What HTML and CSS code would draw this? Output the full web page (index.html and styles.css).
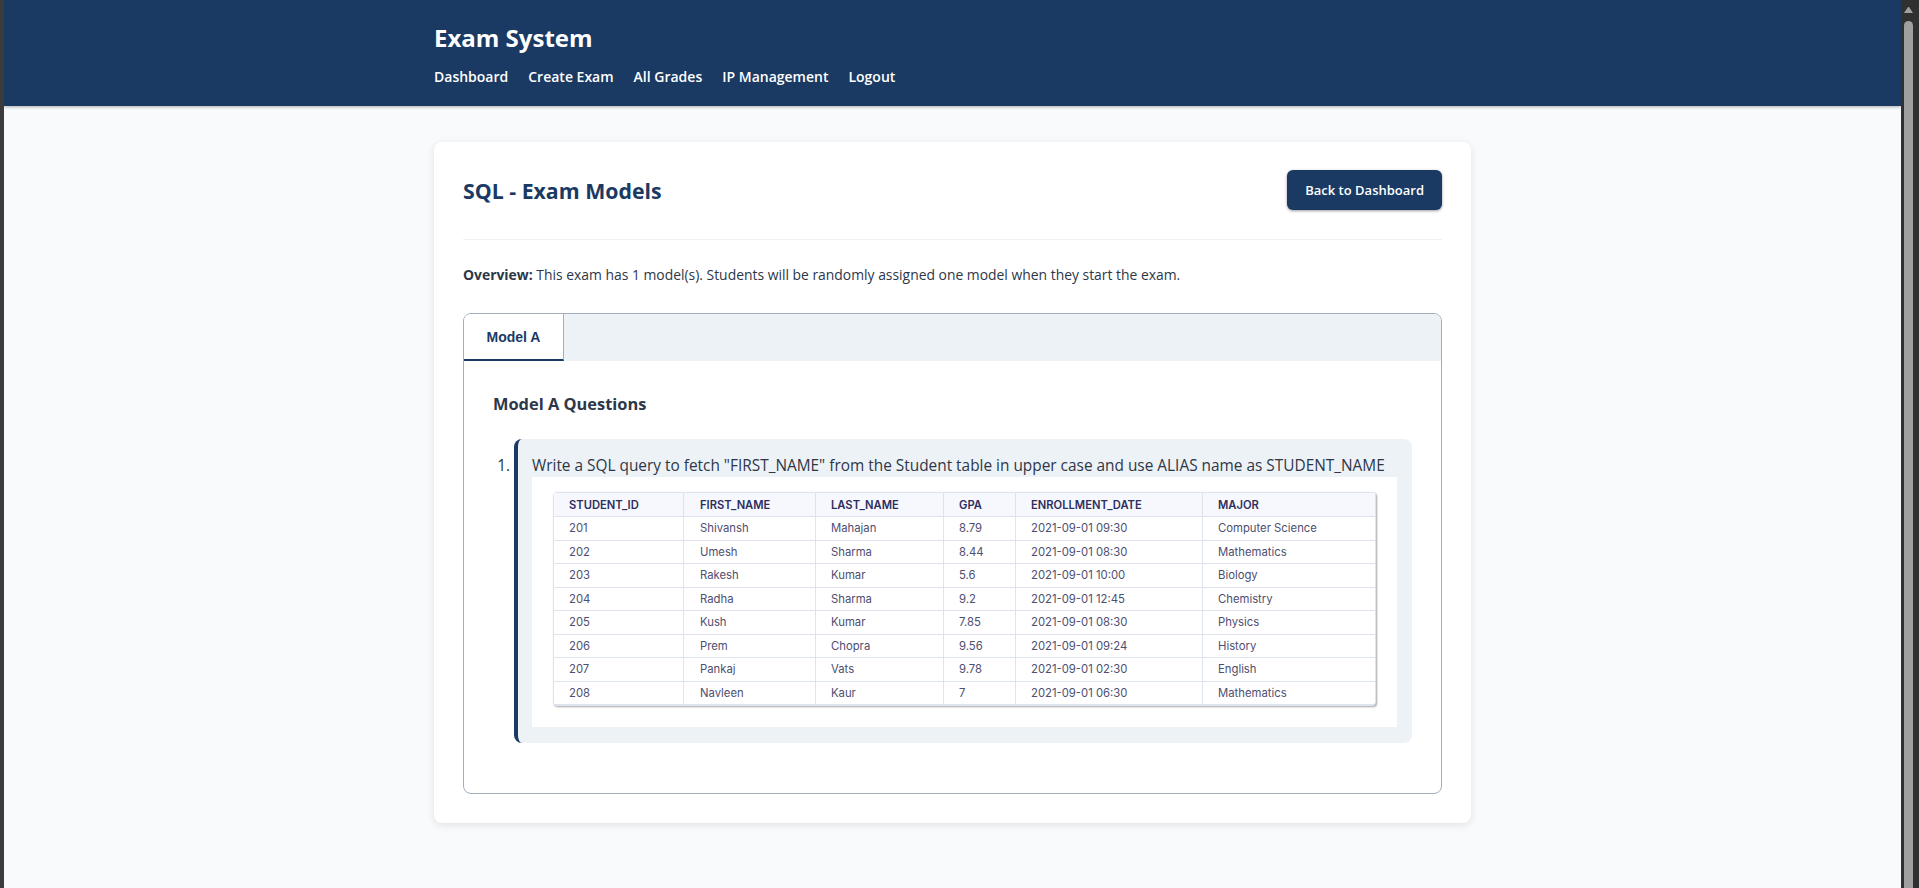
FILE: index.html
```html
<!DOCTYPE html>
<html lang="en">

<head>
    <meta charset="UTF-8">
    <meta name="viewport" content="width=device-width, initial-scale=1.0">
    <title>SQL - Exam Models</title>
    <link rel="stylesheet" href="styles.css">
</head>

<body>
    <div class="window">
        <div class="page">
            <header class="site-header">
                <div class="container">
                    <h1 class="brand">Exam System</h1>
                    <nav class="nav">
                        <a href="#">Dashboard</a>
                        <a href="#">Create Exam</a>
                        <a href="#">All Grades</a>
                        <a href="#">IP Management</a>
                        <a href="#">Logout</a>
                    </nav>
                </div>
            </header>

            <main class="container">
                <section class="card">
                    <div class="card-head">
                        <h2>SQL - Exam Models</h2>
                        <a href="#" class="btn">Back to Dashboard</a>
                    </div>

                    <p class="overview"><strong>Overview:</strong> This exam has 1 model(s). Students will be randomly assigned one model when they start the exam.</p>

                    <div class="tabs">
                        <div class="tab-bar">
                            <button class="tab active">Model A</button>
                        </div>
                        <div class="tab-body">
                            <h3>Model A Questions</h3>
                            <ol class="questions">
                                <li>
                                    <div class="question">
                                        <div class="question-text">Write a SQL query to fetch "FIRST_NAME" from the Student table in upper case and use ALIAS name as STUDENT_NAME</div>
                                        <div class="question-image">
                                            <table class="students">
                                                <thead>
                                                    <tr><th>STUDENT_ID</th><th>FIRST_NAME</th><th>LAST_NAME</th><th>GPA</th><th>ENROLLMENT_DATE</th><th>MAJOR</th></tr>
                                                </thead>
                                                <tbody>
                                                    <tr><td>201</td><td>Shivansh</td><td>Mahajan</td><td>8.79</td><td>2021-09-01 09:30</td><td>Computer Science</td></tr>
                                                    <tr><td>202</td><td>Umesh</td><td>Sharma</td><td>8.44</td><td>2021-09-01 08:30</td><td>Mathematics</td></tr>
                                                    <tr><td>203</td><td>Rakesh</td><td>Kumar</td><td>5.6</td><td>2021-09-01 10:00</td><td>Biology</td></tr>
                                                    <tr><td>204</td><td>Radha</td><td>Sharma</td><td>9.2</td><td>2021-09-01 12:45</td><td>Chemistry</td></tr>
                                                    <tr><td>205</td><td>Kush</td><td>Kumar</td><td>7.85</td><td>2021-09-01 08:30</td><td>Physics</td></tr>
                                                    <tr><td>206</td><td>Prem</td><td>Chopra</td><td>9.56</td><td>2021-09-01 09:24</td><td>History</td></tr>
                                                    <tr><td>207</td><td>Pankaj</td><td>Vats</td><td>9.78</td><td>2021-09-01 02:30</td><td>English</td></tr>
                                                    <tr><td>208</td><td>Navleen</td><td>Kaur</td><td>7</td><td>2021-09-01 06:30</td><td>Mathematics</td></tr>
                                                </tbody>
                                            </table>
                                        </div>
                                    </div>
                                </li>
                            </ol>
                        </div>
                    </div>
                </section>
            </main>
        </div>

        <div class="scrollbar">
            <div class="scroll-arrow"></div>
            <div class="scroll-thumb"></div>
        </div>
    </div>
</body>

</html>
```

FILE: styles.css
```css
* {
    box-sizing: border-box;
}

body,
html {
    height: 100%;
    margin: 0;
    overflow: hidden;
    font-family: "Open Sans", "Noto Sans", Arial, sans-serif;
    color: #2d3748;
}

.window {
    display: flex;
    height: 100%;
    padding-left: 4px;
    background-color: #3b3b3b;
}

.page {
    flex: 1;
    min-width: 0;
    overflow: hidden;
    background-color: #f9fafc;
}

.container {
    width: 1037px;
    margin: 0 auto;
}

/* header */

.site-header {
    height: 106px;
    padding-top: 20px;
    background-color: #1a3a63;
    box-shadow: 0 1px 3px rgba(0, 0, 0, 0.3);
}

.brand {
    margin: 0;
    font-size: 24px;
    line-height: 36px;
    font-weight: 700;
    color: white;
}

.nav {
    display: flex;
    gap: 20px;
    margin-top: 11px;
}

.nav a {
    font-size: 14px;
    line-height: 20px;
    font-weight: 600;
    color: white;
    text-decoration: none;
}

/* card */

.card {
    margin-top: 36px;
    height: 681px;
    padding: 28px 29px;
    background-color: white;
    border-radius: 8px;
    box-shadow: 0 2px 8px rgba(0, 0, 0, 0.1);
}

.card-head {
    display: flex;
    justify-content: space-between;
    align-items: flex-start;
    height: 70px;
    border-bottom: 1px solid #edf2f7;
}

.card-head h2 {
    margin: 0;
    font-size: 21.3px;
    line-height: 42px;
    font-weight: 700;
    color: #1a3a63;
}

.btn {
    display: flex;
    align-items: center;
    height: 40px;
    padding: 0 18px;
    font-size: 13px;
    font-weight: 600;
    color: white;
    text-decoration: none;
    background-color: #1a3a63;
    border-radius: 6px;
    box-shadow: 0 1px 3px rgba(0, 0, 0, 0.4);
}

.overview {
    margin: 25px 0 0;
    font-size: 13.9px;
    line-height: 20px;
}

/* tabs */

.tabs {
    margin-top: 28px;
    height: 481px;
    border: 1px solid #a0aec0;
    border-radius: 8px;
    overflow: hidden;
}

.tab-bar {
    display: flex;
    height: 47px;
    background-color: #edf2f7;
}

.tab {
    width: 100px;
    padding: 0;
    font-family: "Liberation Sans", Arial, sans-serif;
    font-size: 14px;
    font-weight: 700;
    color: #1a3a63;
    background-color: white;
    border: none;
    border-right: 1px solid #a0aec0;
    border-bottom: 2px solid #1a3a63;
}

.tab-body {
    padding: 32px 29px;
}

.tab-body h3 {
    margin: 0 0 24px;
    font-size: 16.4px;
    line-height: 22px;
    font-weight: 700;
}

/* question */

.questions {
    margin: 0;
    padding-left: 21px;
    font-size: 15.4px;
}

.question {
    padding: 15px 15px 16px 14px;
    background-color: #edf2f7;
    border-left: 4px solid #1a3a63;
    border-radius: 8px;
}

.question-text {
    height: 23px;
    line-height: 23px;
    white-space: nowrap;
}

.question-image {
    height: 250px;
    padding: 15px 20px 20px 21px;
    background-color: white;
}

.students {
    width: 823px;
    table-layout: fixed;
    border-spacing: 0;
    font-family: Inter, "Open Sans", sans-serif;
    font-size: 11.3px;
    color: #4e4e70;
    background-color: white;
    border: 1px solid #dde4ee;
    border-radius: 4px;
    box-shadow: 1px 1px 2px rgba(0, 0, 0, 0.35);
}

.students th,
.students td {
    padding: 0 0 0 15px;
    text-align: left;
    border-right: 1px solid #dde4ee;
    border-bottom: 1px solid #dde4ee;
}

.students td {
    height: 23.5px;
}

.students th {
    height: 24px;
    font-size: 11.2px;
    font-weight: 600;
    color: #2e2e5e;
    background-color: #f6f8fd;
}

.students th:nth-child(1) { width: 130px; }
.students th:nth-child(2) { width: 132px; }
.students th:nth-child(3) { width: 128px; }
.students th:nth-child(4) { width: 72px; }
.students th:nth-child(5) { width: 187px; }

.students th:nth-child(2),
.students td:nth-child(2) {
    padding-left: 16px;
}

.students th:last-child,
.students td:last-child {
    border-right: none;
}

/* browser scrollbar */

.scrollbar {
    position: relative;
    flex: none;
    width: 18px;
    background-color: #303030;
}

.scroll-arrow {
    width: 9px;
    height: 0;
    margin: 7px 0 0 3px;
    border-left: 4.5px solid transparent;
    border-right: 4.5px solid transparent;
    border-bottom: 6px solid #a0a0a0;
}

.scroll-thumb {
    position: absolute;
    top: 21px;
    bottom: 0;
    left: 3px;
    width: 9px;
    background-color: #9f9f9f;
    border-radius: 5px 5px 0 0;
}
```
